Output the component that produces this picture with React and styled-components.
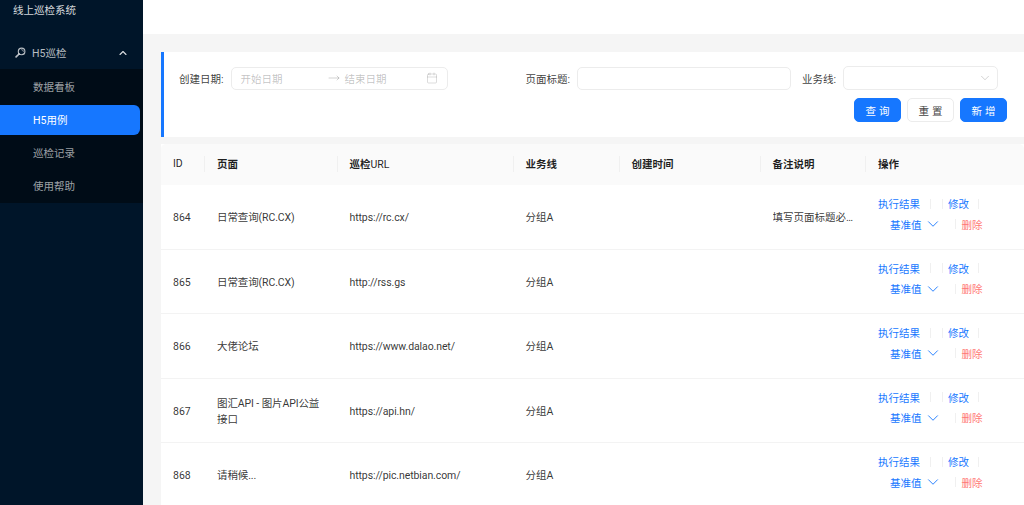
import React from 'react'
import styled, { createGlobalStyle } from 'styled-components'
import { ChevronDown, ChevronUp, Calendar, MoveRight } from 'lucide-react'

const GlobalStyle = createGlobalStyle`
  html, body {
    margin: 0;
    height: 505px;
    overflow: hidden;
    background: #f5f5f5;
    font-family: Roboto, "Noto Sans CJK SC", sans-serif;
    font-size: 10.5px;
    color: rgba(0, 0, 0, 0.88);
  }
  * { box-sizing: border-box; }
`

const Layout = styled.div`
  display: flex;
  width: 1024px;
  height: 505px;
  overflow: hidden;
`

const Sider = styled.aside`
  width: 143px;
  flex: none;
  background: #001529;
  color: rgba(255, 255, 255, 0.85);
`

const Brand = styled.div`
  height: 20px;
  padding: 3px 0 0 13px;
  line-height: 15px;
`

const SubTitle = styled.div`
  display: flex;
  align-items: center;
  height: 33px;
  margin-top: 16px;
  padding: 0 14px 0 15px;
  color: rgba(255, 255, 255, 0.72);
  svg:first-child { margin-right: 6px; }
  svg:last-child { margin-left: auto; color: rgba(255, 255, 255, 0.85); }
`

const SubMenu = styled.div`
  background: #000c17;
  padding: 3px 0 2px;
  display: flex;
  flex-direction: column;
  gap: 3px;
`

const MenuItem = styled.div`
  height: 30px;
  width: 140px;
  padding: 1px 0 0 33px;
  line-height: 30px;
  border-radius: 0 6px 6px 0;
  background: ${p => (p.$active ? '#1677ff' : 'transparent')};
  color: ${p => (p.$active ? '#fff' : 'rgba(255, 255, 255, 0.62)')};
`

const Main = styled.main`
  flex: 1;
  min-width: 0;
`

const TopBar = styled.div`
  height: 34px;
  background: #fff;
`

const Content = styled.div`
  padding: 18px 0 0 18px;
`

const FilterCard = styled.section`
  height: 85px;
  background: #fff;
  border-left: 3px solid #1677ff;
  padding: 14px 17px 0 15px;
`

const FilterRow = styled.div`
  display: flex;
  align-items: center;
  height: 24px;
`

const Label = styled.label`
  margin-right: 7px;
  white-space: nowrap;
  color: rgba(0, 0, 0, 0.78);
`

const Field = styled.div`
  display: flex;
  align-items: center;
  flex: none;
  width: ${p => p.$width}px;
  height: ${p => p.$height || 23}px;
  margin-right: ${p => p.$gap || 0}px;
  padding: 0 9px;
  background: #fff;
  border: 1px solid #ececec;
  border-radius: 5px;
  color: rgba(0, 0, 0, 0.25);
  svg { flex: none; }
`

const Placeholder = styled.span`
  flex: ${p => (p.$width ? `0 0 ${p.$width}px` : 1)};
`

const Arrow = styled(MoveRight)`
  margin-right: 5px;
`

const SelectArrow = styled(ChevronDown)`
  margin-right: -4px;
`

const Actions = styled.div`
  display: flex;
  justify-content: flex-end;
  gap: 6px;
  margin-top: 8px;
`

const Button = styled.button`
  width: 47px;
  height: 24px;
  padding: 0;
  font: inherit;
  letter-spacing: 3px;
  text-indent: 3px;
  border-radius: 5px;
  border: 1px solid ${p => (p.$primary ? '#1677ff' : '#ececec')};
  background: ${p => (p.$primary ? '#1677ff' : '#fff')};
  color: ${p => (p.$primary ? '#fff' : 'rgba(0, 0, 0, 0.78)')};
`

const Table = styled.table`
  width: 863px;
  margin-top: 7px;
  table-layout: fixed;
  border-collapse: separate;
  border-spacing: 0;
  background: #fff;
`

const HeadCell = styled.th`
  position: relative;
  height: 41px;
  padding: 0 12px 2px;
  background: #fafafa;
  text-align: left;
  font-weight: 600;
  font-size: 10.5px;
  &:first-child { border-top-left-radius: 5px; }
  &:last-child { border-top-right-radius: 5px; }
  &:not(:last-child)::after {
    content: '';
    position: absolute;
    right: 0;
    top: 12px;
    height: 16px;
    width: 1px;
    background: #f0f0f0;
  }
`

const HeadLatin = styled.span`
  font-weight: 400;
`

const Row = styled.tr`
  height: 64.5px;
  td { border-bottom: 1px solid #f3f3f3; }
`

const Cell = styled.td`
  padding: 3px 12px 0;
  line-height: 16px;
  color: rgba(0, 0, 0, 0.8);
  letter-spacing: ${p => (p.$tight ? '-0.1px' : 'normal')};
`

const Ellipsis = styled.div`
  overflow: hidden;
  white-space: nowrap;
  text-overflow: ellipsis;
`

const OpCell = styled.td`
  padding: 0 0 6px 12px;
`

const OpLine = styled.div`
  display: flex;
  align-items: center;
  height: 20.5px;
  padding-left: ${p => p.$indent || 0}px;
`

const OpLink = styled.a`
  display: inline-flex;
  align-items: center;
  color: ${p => (p.$danger ? '#ff7875' : '#1677ff')};
  white-space: nowrap;
  svg { margin-left: 2px; }
`

const OpDivider = styled.i`
  flex: none;
  width: 1px;
  height: 10px;
  margin: 0 ${p => p.$right || 0}px 0 ${p => p.$left || 0}px;
  background: #f0f0f0;
`

const columns = [
  { latin: 'ID', width: 44 },
  { title: '页面', width: 132.5 },
  { title: '巡检', latin: 'URL', width: 176 },
  { title: '业务线', width: 106 },
  { title: '创建时间', width: 141 },
  { title: '备注说明', width: 105.5 },
  { title: '操作', width: 158 },
]

const rows = [
  { id: 864, page: '日常查询(RC.CX)', url: 'https://rc.cx/', note: '填写页面标题必填项' },
  { id: 865, page: '日常查询(RC.CX)', url: 'http://rss.gs' },
  { id: 866, page: '大佬论坛', url: 'https://www.dalao.net/' },
  { id: 867, page: '图汇API - 图片API公益接口', url: 'https://api.hn/' },
  { id: 868, page: '请稍候...', url: 'https://pic.netbian.com/' },
]

const menu = ['数据看板', 'H5用例', '巡检记录', '使用帮助']

const ScopeIcon = () => (
  <svg width="11" height="11" viewBox="0 0 12 12" fill="none" stroke="currentColor" strokeLinecap="round">
    <circle cx="7.2" cy="4.8" r="3.6" strokeWidth="1.2" />
    <path d="M7.2 2.8a2 2 0 0 1 2 2" strokeWidth="0.8" />
    <path d="M4.4 7.6L1.2 10.8" strokeWidth="1.8" />
  </svg>
)

export default function App() {
  return (
    <Layout>
      <GlobalStyle />
      <Sider>
        <Brand>线上巡检系统</Brand>
        <SubTitle>
          <ScopeIcon />
          H5巡检
          <ChevronUp size={12} strokeWidth={2.2} />
        </SubTitle>
        <SubMenu>
          {menu.map(name => (
            <MenuItem key={name} $active={name === 'H5用例'}>{name}</MenuItem>
          ))}
        </SubMenu>
      </Sider>
      <Main>
        <TopBar />
        <Content>
          <FilterCard>
            <FilterRow>
              <Label>创建日期:</Label>
              <Field $width={217} $gap={78}>
                <Placeholder $width={87}>开始日期</Placeholder>
                <Arrow size={12} strokeWidth={1.4} />
                <Placeholder>结束日期</Placeholder>
                <Calendar size={12} strokeWidth={1.1} />
              </Field>
              <Label>页面标题:</Label>
              <Field $width={214} $gap={11} />
              <Label>业务线:</Label>
              <Field $width={155} $height={24}>
                <Placeholder />
                <SelectArrow size={14} strokeWidth={1.2} />
              </Field>
            </FilterRow>
            <Actions>
              <Button $primary>查询</Button>
              <Button>重置</Button>
              <Button $primary>新增</Button>
            </Actions>
          </FilterCard>
          <Table>
            <colgroup>
              {columns.map((c, i) => <col key={i} width={c.width} />)}
            </colgroup>
            <thead>
              <tr>
                {columns.map((c, i) => (
                  <HeadCell key={i}>{c.title}{c.latin && <HeadLatin>{c.latin}</HeadLatin>}</HeadCell>
                ))}
              </tr>
            </thead>
            <tbody>
              {rows.map(r => (
                <Row key={r.id}>
                  <Cell>{r.id}</Cell>
                  <Cell $tight>{r.page}</Cell>
                  <Cell $tight>{r.url}</Cell>
                  <Cell>分组A</Cell>
                  <Cell />
                  <Cell><Ellipsis>{r.note}</Ellipsis></Cell>
                  <OpCell>
                    <OpLine>
                      <OpLink>执行结果</OpLink>
                      <OpDivider $left={10} $right={11} />
                      <OpDivider $right={5} />
                      <OpLink>修改</OpLink>
                      <OpDivider $left={9} />
                    </OpLine>
                    <OpLine $indent={12}>
                      <OpLink>基准值<ChevronDown size={18} strokeWidth={1.2} /></OpLink>
                      <OpDivider $left={13} $right={6} />
                      <OpLink $danger>删除</OpLink>
                    </OpLine>
                  </OpCell>
                </Row>
              ))}
            </tbody>
          </Table>
        </Content>
      </Main>
    </Layout>
  )
}
